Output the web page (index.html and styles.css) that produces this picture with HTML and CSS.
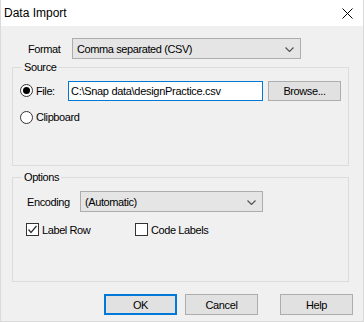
FILE: index.html
```html
<!DOCTYPE html>
<html lang="en">
<head>
	<meta charset="UTF-8" />
	<title>Data Import</title>
	<link rel="stylesheet" href="styles.css">
</head>
<body>
	<div class="dlg">
		<div class="dlg_title">
			<span class="dlg_caption">Data Import</span>
			<span class="dlg_close">
				<svg width="11" height="11" viewBox="0 0 11 11"><path d="M0.5 0.5 L10.5 10.5 M10.5 0.5 L0.5 10.5" stroke="#000" stroke-width="1" fill="none"/></svg>
			</span>
		</div>
		<div class="dlg_body">
			<div class="fmt_row">
				<span class="fmt_lbl">Format</span>
				<div class="combo combo_fmt">
					<span>Comma separated (CSV)</span>
					<svg class="combo_arrow" width="9" height="5" viewBox="0 0 9 5"><path d="M0.5 0.5 L4.5 4.5 L8.5 0.5" stroke="#555" stroke-width="1.2" fill="none"/></svg>
				</div>
			</div>

			<!--source-->
			<fieldset class="grp grp_src">
				<legend>Source</legend>
				<div class="src_row">
					<label class="opt opt_file"><span class="radio on"></span>File:</label>
					<div class="txt">C:\Snap data\designPractice.csv</div>
					<div class="btn btn_browse">Browse...</div>
				</div>
				<div class="src_row src_row2">
					<label class="opt"><span class="radio"></span>Clipboard</label>
				</div>
			</fieldset>

			<!--options-->
			<fieldset class="grp grp_opt">
				<legend>Options</legend>
				<div class="enc_row">
					<span class="enc_lbl">Encoding</span>
					<div class="combo combo_enc">
						<span>(Automatic)</span>
						<svg class="combo_arrow" width="9" height="5" viewBox="0 0 9 5"><path d="M0.5 0.5 L4.5 4.5 L8.5 0.5" stroke="#555" stroke-width="1.2" fill="none"/></svg>
					</div>
				</div>
				<div class="chk_row">
					<label class="opt opt_label"><span class="chk"><svg width="11" height="11" viewBox="0 0 11 11"><path d="M1.5 5.5 L4 8.5 L9.5 2" stroke="#333" stroke-width="1.3" fill="none"/></svg></span>Label Row</label>
					<label class="opt"><span class="chk"></span>Code Labels</label>
				</div>
			</fieldset>

			<div class="btn_row">
				<div class="btn btn_ok">OK</div>
				<div class="btn">Cancel</div>
				<div class="btn btn_help">Help</div>
			</div>
		</div>
	</div>
</body>
</html>
```

FILE: styles.css
```css
* { margin: 0; padding: 0; box-sizing: border-box; }
body { background: #f0f0f0; font-family: "Liberation Sans", Arial, sans-serif; font-size: 11px; color: #000; }

.dlg {
	width: 364px;
	height: 322px;
	background: #f0f0f0;
	border: 1px solid #dadada;
	border-top: 0;
}
.dlg_title {
	height: 26px;
	background: #fff;
	display: flex;
	align-items: center;
	justify-content: space-between;
	padding: 0 10px 0 3px;
}
.dlg_caption { font-size: 12px; }
.dlg_close { display: flex; padding-top: 1px; }

.dlg_body { letter-spacing: -0.4px; }

.fmt_row {
	display: flex;
	align-items: center;
	margin-top: 12px;
	padding-left: 27px;
}
.fmt_lbl { width: 44px; }

.combo {
	height: 21px;
	background: #e5e5e5;
	border: 1px solid #adadad;
	display: flex;
	align-items: center;
	justify-content: space-between;
	padding: 0 6px 0 4px;
}
.combo_fmt { width: 229px; }
.combo_enc { width: 183px; }
.combo_arrow { margin-top: 1px; }

.grp {
	border: 1px solid #dcdcdc;
	margin-left: 11px;
	width: 337px;
	padding: 0 0 0 7px;
}
.grp legend {
	margin-left: 2px;
	padding: 0 2px;
	line-height: 12px;
}
.grp_src { margin-top: 2px; height: 105px; }
.grp_opt { margin-top: 5px; height: 111px; }

.src_row {
	display: flex;
	align-items: center;
	margin-top: 7px;
}
.src_row2 { margin-top: 6px; height: 20px; }

.opt {
	display: flex;
	align-items: center;
	gap: 3px;
}
.opt_file { width: 48px; }

.radio {
	width: 13px;
	height: 13px;
	border: 1px solid #333;
	border-radius: 50%;
	background: #fff;
	display: flex;
	align-items: center;
	justify-content: center;
}
.radio.on::after {
	content: "";
	width: 7px;
	height: 7px;
	border-radius: 50%;
	background: #000;
}

.txt {
	width: 195px;
	height: 20px;
	background: #fff;
	border: 1px solid #0078d7;
	padding-left: 2px;
	line-height: 18px;
	letter-spacing: -0.3px;
}

.btn {
	width: 73px;
	height: 21px;
	background: #e1e1e1;
	border: 1px solid #adadad;
	display: flex;
	align-items: center;
	justify-content: center;
}
.btn_browse { margin-left: 5px; height: 20px; margin-top: 1px; }

.enc_row {
	display: flex;
	align-items: center;
	margin-top: 8px;
	padding-left: 7px;
}
.enc_lbl { width: 53px; }

.chk_row {
	display: flex;
	margin-top: 11px;
	padding-left: 6px;
}
.opt_label { width: 109px; }
.chk {
	width: 13px;
	height: 13px;
	border: 1px solid #333;
	background: #fff;
	display: flex;
	align-items: center;
	justify-content: center;
}

.btn_row {
	display: flex;
	gap: 8px;
	margin-top: 12px;
	padding-left: 103px;
}
.btn_ok { border: 2px solid #0078d7; }
.btn_help { margin-left: 14px; }
```
